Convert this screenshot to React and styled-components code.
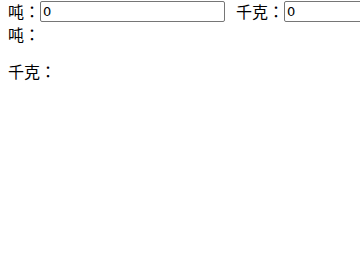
import React from "react";
import styled, { createGlobalStyle } from "styled-components";

const Global = createGlobalStyle`
  html, body { margin: 0; padding: 0; background: #fff; }
  body {
    padding: 1px 8px 0;
    font-family: "Noto Sans CJK JP", "Noto Sans", sans-serif;
    font-size: 16px;
    color: #000;
    overflow: hidden;
  }
`;

const Row = styled.div`
  display: flex;
  align-items: center;
  height: 21px;
  white-space: nowrap;
`;

const Label = styled.span`
  flex-shrink: 0;
  margin-left: ${(p) => p.$gap || 0}px;
  line-height: 21px;
`;

const Field = styled.input`
  flex-shrink: 0;
  box-sizing: border-box;
  width: 185px;
  height: 21px;
  margin: 0;
  padding: 1px 2px;
  border: 1px solid #767676;
  border-radius: 2px;
  font-family: "DejaVu Sans", sans-serif;
  font-size: 13px;
  color: #000;
  background: #fff;
  outline: none;
`;

const Result = styled.div`
  line-height: 20px;
  margin-top: ${(p) => p.$top || 0}px;
`;

export default function App() {
  return (
    <>
      <Global />
      <Row>
        <Label>吨：</Label>
        <Field defaultValue="0" />
        <Label $gap={11}>千克：</Label>
        <Field defaultValue="0" />
      </Row>
      <Result $top={2}>吨：</Result>
      <Result $top={17}>千克：</Result>
    </>
  );
}
